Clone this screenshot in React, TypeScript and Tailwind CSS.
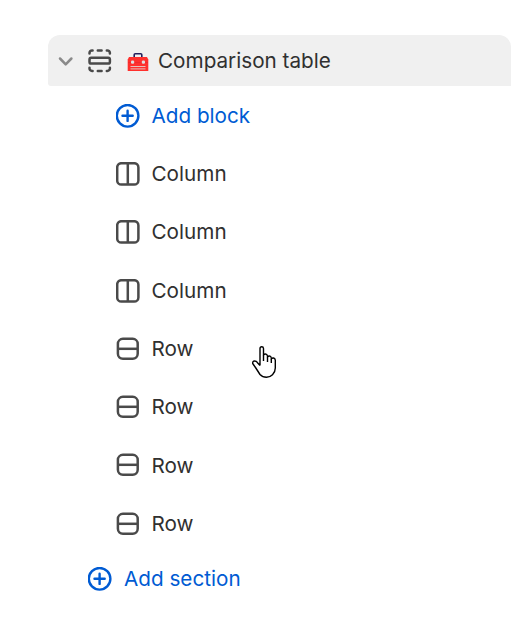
const blocks = ['Column', 'Column', 'Column', 'Row', 'Row', 'Row', 'Row'];

function PlusIcon() {
    return (
        <svg className="size-6 shrink-0" viewBox="0 0 24 24" fill="none" stroke="currentColor" strokeWidth="2.4" strokeLinecap="round">
            <circle cx="11.6" cy="11.8" r="10.8" />
            <path d="M11.6 6.7v10.2M6.5 11.8h10.2" />
        </svg>
    )
}

function ColumnIcon() {
    return (
        <svg className="size-6 shrink-0 text-[#4a4a4a]" viewBox="0 0 24 24" fill="none" stroke="currentColor" strokeWidth="2.5">
            <rect x="1.2" y="1.2" width="21.2" height="21.4" rx="4.2" />
            <path d="M11.8 1.5v21" />
        </svg>
    )
}

function RowIcon() {
    return (
        <svg className="size-6 shrink-0 text-[#4a4a4a]" viewBox="0 0 24 24" fill="none" stroke="currentColor" strokeWidth="2.5">
            <rect x="1.9" y="1.8" width="19.8" height="20" rx="5" />
            <path d="M2 11.8h20" />
        </svg>
    )
}

function SectionIcon() {
    return (
        <svg className="size-6 shrink-0 text-[#4a4a4a]" viewBox="0 0 24 24" fill="none" stroke="currentColor" strokeWidth="2.5" strokeLinecap="round">
            <rect x="1.5" y="8.8" width="20.4" height="5.8" rx="1.7" />
            <path d="M1.5 4.6V4A2.5 2.5 0 0 1 4 1.5h.6M9.8 1.5h3.8M18.8 1.5h.6A2.5 2.5 0 0 1 21.9 4v.6" />
            <path d="M1.5 18.8v.6A2.5 2.5 0 0 0 4 21.9h.6M9.8 21.9h3.8M18.8 21.9h.6a2.5 2.5 0 0 0 2.5-2.5v-.6" />
        </svg>
    )
}

function ToolboxIcon() {
    return (
        <svg className="ml-[15.5px] mt-[2px] h-[19px] w-[22px] shrink-0" viewBox="0 0 22 19">
            <path d="M7.2 5V2.8Q7.2 1.7 8.3 1.7h5.4Q14.8 1.7 14.8 2.8V5" fill="none" stroke="#24205c" strokeWidth="1.6" />
            <path d="M2 5h18L21.3 7.5V19H.7V7.5z" fill="#ff302d" />
            <path d="M1 10.5h20" stroke="#e52a2f" strokeWidth=".7" />
            <rect x="4" y="8.5" width="3.2" height="3.2" rx="1.3" fill="#dedede" />
            <rect x="14.8" y="8.5" width="3.2" height="3.2" rx="1.3" fill="#dedede" />
            <path d="M3.5 14.5h15M3.5 16.9h15" stroke="#e6bfbb" strokeWidth="1" />
        </svg>
    )
}

function HandCursor() {
    return (
        <svg className="absolute left-[252px] top-[346px] h-8 w-6" viewBox="0 0 24 32" fill="#fff" stroke="#000" strokeWidth="1.4" strokeLinejoin="round">
            <path d="M8 19.5V2.5Q8 .7 9.7.7T11.5 2.5V9Q12 8 13.5 8T15.5 10V11Q16 10 17.5 10T19.3 12V13Q20 11.8 21.5 12T23.3 14V22Q23.3 26 20.5 28.8Q18 31.3 14.5 31.3Q10.500 31.300 8 28.500L3.500 21.500.7 17.500Q.5 15 2.500 15T5.500 16.700L8 19.500" />
            <path d="M11.5 9v6M15.5 11v5M19.3 13v4" />
        </svg>
    )
}

export default function App() {
    return (
        <main className="relative h-[643px] w-[511px] overflow-hidden bg-white pt-[35px] font-['Inter',sans-serif] text-[20.7px] leading-none text-[#303030]">
            <header className="ml-12 flex h-[51px] items-center rounded-t-[12px] rounded-bl-[3px] bg-[#f0f0f0] pl-[10px]">
                <svg className="h-4 w-4 text-[#8a8a8a]" viewBox="0 0 16 16" fill="none" stroke="currentColor" strokeWidth="2.5" strokeLinecap="round" strokeLinejoin="round">
                    <path d="M2 5.5l5.7 5.8 5.7-5.8" />
                </svg>
                <div className="ml-[13.5px] flex items-center">
                    <SectionIcon />
                    <ToolboxIcon />
                    <h1 className="ml-[9px] pt-[1.5px] font-[440]">Comparison table</h1>
                </div>
            </header>

            <section className="pl-[115.5px]">
                <button className="flex h-[58.3px] items-center gap-3 pt-px font-[440] text-[#005bd3]">
                    <PlusIcon />
                    <span className="pt-[0.9px]">Add block</span>
                </button>
                <ul className="font-[440]">
                    {blocks.map((name, i) => (
                        <li key={i} className="flex h-[58.3px] items-center gap-3 pt-px">
                            {name === 'Column' ? <ColumnIcon /> : <RowIcon />}
                            <span className="pt-[0.9px]">{name}</span>
                        </li>
                    ))}
                </ul>
            </section>

            <button className="ml-[87.5px] flex h-[52px] items-center gap-[12.5px] pt-px font-[440] text-[#005bd3]">
                <PlusIcon />
                <span>Add section</span>
            </button>

            <HandCursor />
        </main>
    )
}
